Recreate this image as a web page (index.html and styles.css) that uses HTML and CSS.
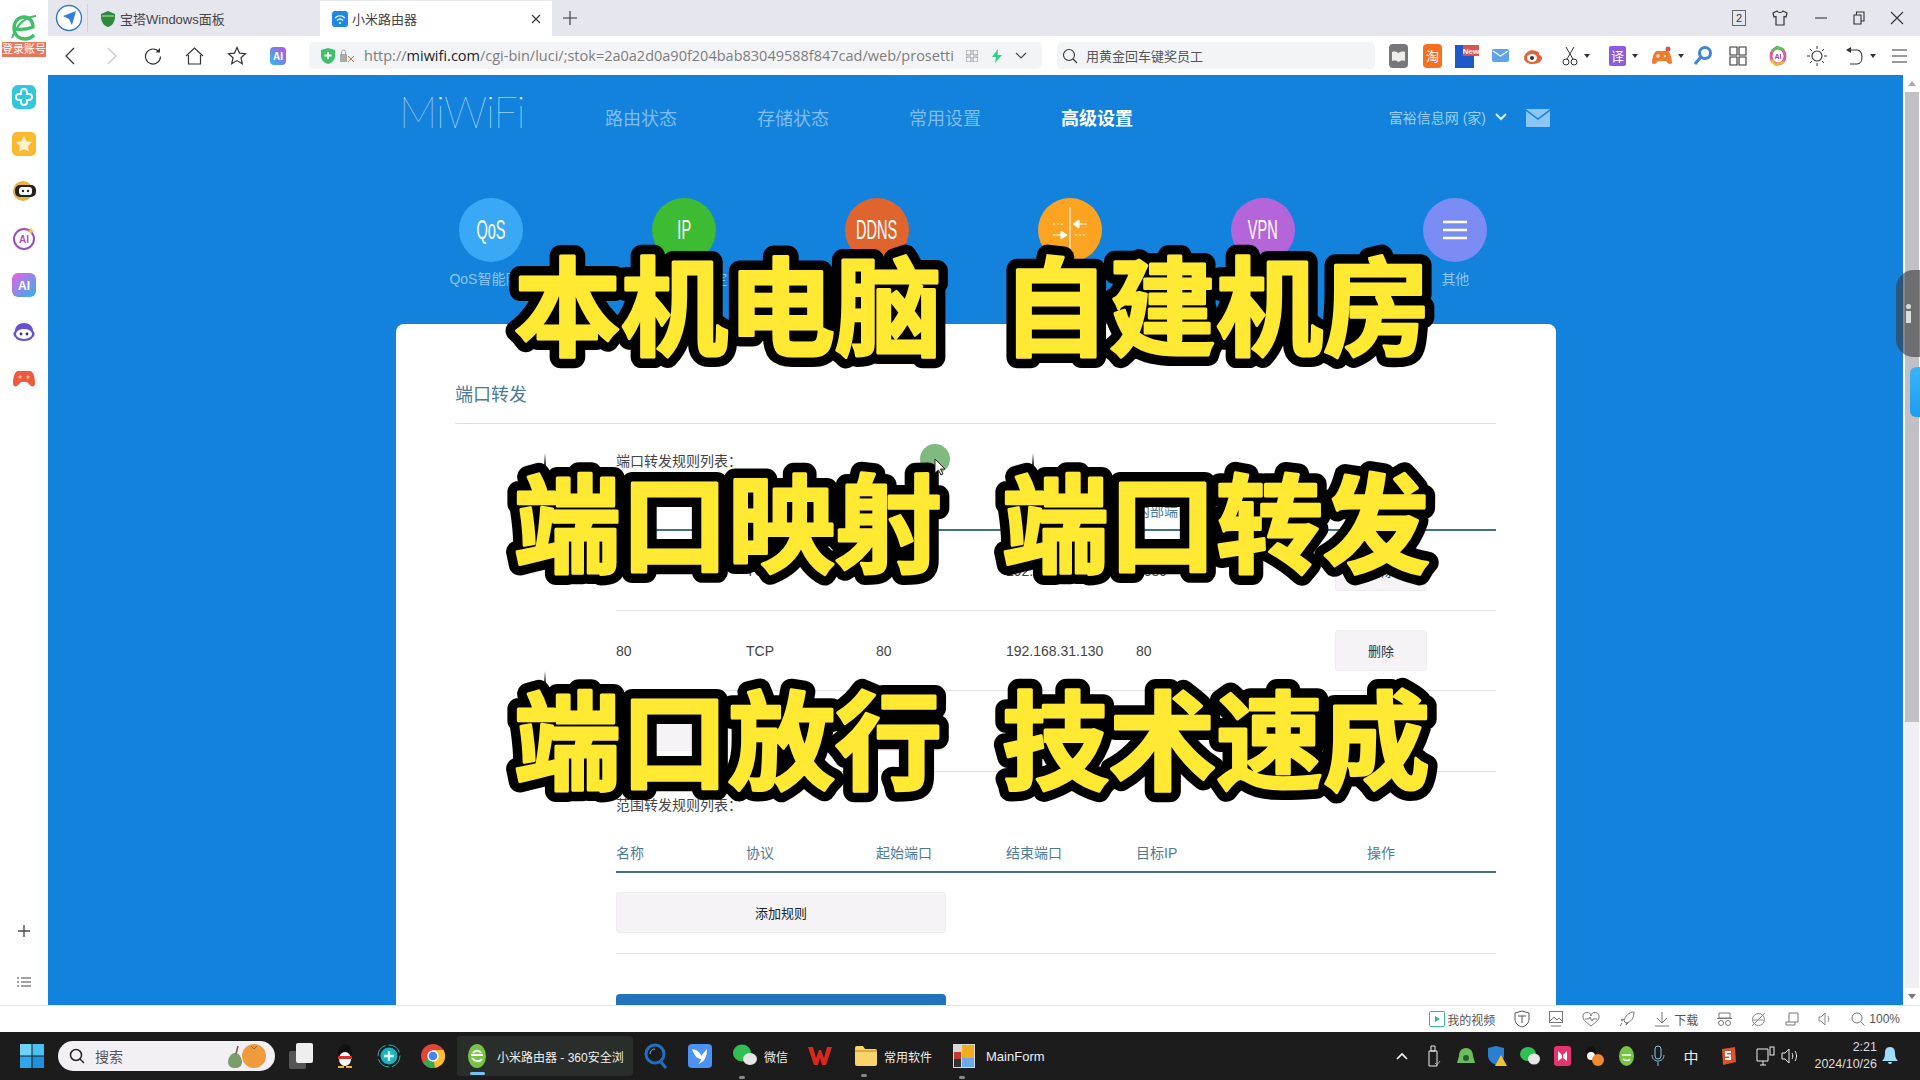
FILE: index.html
```html
<!DOCTYPE html>
<html lang="zh-CN">
<head>
    <meta charset="UTF-8">
    <title>小米路由器</title>
    <link rel="stylesheet" href="styles.css">
</head>
<body>
<div class="window">
    <!-- 左侧栏 -->
    <aside class="rail">
        <div class="rail-logo">
            <svg width="26" height="28" viewBox="0 0 26 28"><path d="M4 15c7 1 13 0 18-2 0-6-4-10-9-10-6 0-10 5-10 11 0 7 5 11 11 11 4 0 7-2 9-4" fill="none" stroke="#3fbf6a" stroke-width="3.4"/><path d="M1 24C6 10 15 3 25 2" fill="none" stroke="#3fbf6a" stroke-width="2"/></svg>
        </div>
        <div class="rail-badge">登录账号</div>
        <div class="rail-apps">
            <svg width="24" height="24" viewBox="0 0 24 24"><rect width="24" height="24" rx="6" fill="#31c7dc"/><path d="M12 4a3 3 0 0 1 3 3v2h2a3 3 0 0 1 0 6h-2v2a3 3 0 0 1-6 0v-2H7a3 3 0 0 1 0-6h2V7a3 3 0 0 1 3-3z" fill="none" stroke="#fff" stroke-width="1.8"/></svg>
            <svg width="24" height="24" viewBox="0 0 24 24"><rect width="24" height="24" rx="5" fill="#fdb92e"/><path d="M12 4l2.5 5.2 5.5.8-4 4 1 5.6-5-2.7-5 2.7 1-5.6-4-4 5.5-.8z" fill="#fff4d0"/></svg>
            <svg width="24" height="24" viewBox="0 0 24 24"><circle cx="11" cy="12" r="10" fill="#e8b23f"/><rect x="3" y="6" width="21" height="12" rx="5" fill="#222"/><rect x="7" y="8" width="13" height="8" rx="3" fill="#fff"/><circle cx="11" cy="12" r="1.2" fill="#222"/><circle cx="16" cy="12" r="1.2" fill="#222"/></svg>
            <svg width="24" height="24" viewBox="0 0 24 24"><circle cx="12" cy="13" r="10" fill="none" stroke="#9a4fc0" stroke-width="2"/><path d="M19 1l1 3 3 1-3 1-1 3-1-3-3-1 3-1z" fill="#f0c24a"/><text x="12" y="17" class="rail-ai">AI</text></svg>
            <svg width="24" height="24" viewBox="0 0 24 24"><defs><linearGradient id="aig" x1="0" y1="0" x2="1" y2="1"><stop offset="0" stop-color="#e85fe0"/><stop offset="1" stop-color="#2fb4ee"/></linearGradient></defs><rect width="24" height="24" rx="6" fill="url(#aig)"/><text x="12" y="17" class="rail-ai rail-ai-w">AI</text></svg>
            <svg width="24" height="24" viewBox="0 0 24 24"><path d="M12 3c6 0 9 4 9 8 2 1 2 5 0 6-2 3-5 4-9 4s-7-1-9-4c-2-1-2-5 0-6 0-4 3-8 9-8z" fill="#6a4fd0"/><ellipse cx="12" cy="14" rx="8" ry="5" fill="#fff"/><circle cx="9" cy="14" r="1.4" fill="#3a2a90"/><circle cx="15" cy="14" r="1.4" fill="#3a2a90"/></svg>
            <svg width="24" height="24" viewBox="0 0 24 24"><path d="M6 4h12c3 0 5 6 5 12 0 3-2 4-4 3l-4-4H9l-4 4c-2 1-4 0-4-3C1 10 3 4 6 4z" fill="#ee5a3c"/><circle cx="8" cy="10" r="1.6" fill="#ffb39f"/><circle cx="16" cy="10" r="1.6" fill="#ffb39f"/></svg>
        </div>
        <div class="rail-foot">
            <svg width="16" height="16" viewBox="0 0 16 16"><path d="M8 2v12M2 8h12" stroke="#444" stroke-width="1.3"/></svg>
            <svg width="14" height="12" viewBox="0 0 14 12"><path d="M4 2h10M4 6h10M4 10h10M0 2h2M0 6h2M0 10h2" stroke="#444" stroke-width="1.2"/></svg>
        </div>
    </aside>

    <div class="browser">
        <!-- 标签栏 -->
        <div class="tabbar">
            <div class="tab-nav">
                <svg width="28" height="28" viewBox="0 0 28 28"><circle cx="14" cy="14" r="12.5" fill="#fff" stroke="#3a78c8" stroke-width="1.4"/><path d="M21 7l-4 14-3-6-6-3z" fill="#2e7fe0"/></svg>
            </div>
            <div class="tab">
                <svg width="16" height="18" viewBox="0 0 16 18"><path d="M8 1l7 3v3c0 5-3 9-7 10-4-1-7-5-7-10V4z" fill="#2f8a3d"/><path d="M2 6h12" stroke="#bfe3b0"/></svg>
                <span>宝塔Windows面板</span>
            </div>
            <div class="tab tab-active">
                <svg width="16" height="16" viewBox="0 0 16 16"><rect width="16" height="16" rx="3" fill="#1e88e5"/><path d="M3 7c3-3 7-3 10 0M5 9.5c2-2 4-2 6 0" fill="none" stroke="#fff" stroke-width="1.2"/><circle cx="8" cy="12" r="1" fill="#fff"/></svg>
                <span>小米路由器</span>
                <svg class="tab-close" width="10" height="10" viewBox="0 0 10 10"><path d="M1 1l8 8M9 1l-8 8" stroke="#333" stroke-width="1.1"/></svg>
            </div>
            <svg class="tab-add" width="16" height="16" viewBox="0 0 16 16"><path d="M8 1v14M1 8h14" stroke="#333" stroke-width="1.1"/></svg>
            <div class="win-btns">
                <span class="win-count">2</span>
                <svg width="18" height="18" viewBox="0 0 18 18"><path d="M6 2L2 4l1 4 2-.5V16h8V7.5l2 .5 1-4-4-2c-1 2-5 2-6 0z" fill="none" stroke="#333" stroke-width="1.2"/></svg>
                <svg width="14" height="14" viewBox="0 0 14 14"><path d="M1 7h12" stroke="#333" stroke-width="1.1"/></svg>
                <svg width="12" height="14" viewBox="0 0 12 14"><path d="M1 4h7v9H1zM3.5 4V1H11v9H8" fill="none" stroke="#333" stroke-width="1.1"/></svg>
                <svg width="14" height="14" viewBox="0 0 14 14"><path d="M1 1l12 12M13 1L1 13" stroke="#333" stroke-width="1.1"/></svg>
            </div>
        </div>

        <!-- 工具栏 -->
        <div class="toolbar">
            <div class="tool-nav">
                <svg width="12" height="18" viewBox="0 0 12 18"><path d="M10 1L2 9l8 8" fill="none" stroke="#333" stroke-width="1.2"/></svg>
                <svg width="12" height="18" viewBox="0 0 12 18"><path d="M2 1l8 8-8 8" fill="none" stroke="#c4c4c4" stroke-width="1.2"/></svg>
                <svg width="18" height="18" viewBox="0 0 18 18"><path d="M15 5a7.5 7.5 0 1 0 1.5 4.5" fill="none" stroke="#333" stroke-width="1.2"/><path d="M11.5 5.5H16V1z" fill="#333"/></svg>
                <svg width="19" height="18" viewBox="0 0 19 18"><path d="M1 9l8.5-8L18 9M3.5 8v9h12V8" fill="none" stroke="#333" stroke-width="1.2"/></svg>
                <svg width="20" height="19" viewBox="0 0 20 19"><path d="M10 1.5l2.5 5.6 6 .6-4.5 4 1.3 6L10 14.6l-5.300 3.100 1.300-6-4.500-4 6-.6z" fill="none" stroke="#333" stroke-width="1.2"/></svg>
                <svg width="16" height="18" viewBox="0 0 16 18"><defs><linearGradient id="aib" x1="1" y1="0" x2="0" y2="1"><stop offset="0" stop-color="#c34fe0"/><stop offset="1" stop-color="#25c0ea"/></linearGradient></defs><rect width="16" height="18" rx="4" fill="url(#aib)"/><text x="8" y="13" class="tool-ai">AI</text></svg>
            </div>
            <div class="addr">
                <svg width="14" height="16" viewBox="0 0 14 16"><path d="M7 0l7 2v6c0 4-3 7-7 8-4-1-7-4-7-8V2z" fill="#3cc36a"/><path d="M7 4v7M3.5 7.5h7" stroke="#fff" stroke-width="2"/></svg>
                <svg class="addr-lock" width="15" height="14" viewBox="0 0 15 14"><rect y="5" width="7" height="8" fill="#aaa"/><path d="M1.5 5V3a2 2 0 0 1 4 0v2" fill="none" stroke="#aaa"/><path d="M8 7l6 6M14 7l-6 6" stroke="#d0704f"/></svg>
                <span class="addr-url">http://<b>miwifi.com</b>/cgi-bin/luci/;stok=2a0a2d0a90f204bab83049588f847cad/web/prosetti</span>
                <svg class="addr-qr" width="12" height="12" viewBox="0 0 12 12"><path d="M0 0h5v5H0zM7 0h5v5H7zM0 7h5v5H0zM7 7h5v5H7z" fill="none" stroke="#999"/></svg>
                <svg class="addr-bolt" width="10" height="14" viewBox="0 0 10 14"><path d="M6 0L0 8h4l-1 6 7-8H5.5z" fill="#2ecf86"/></svg>
                <svg class="addr-more" width="12" height="8" viewBox="0 0 12 8"><path d="M1 1l5 5 5-5" fill="none" stroke="#444" stroke-width="1.1"/></svg>
            </div>
            <div class="search-box">
                <svg width="16" height="16" viewBox="0 0 16 16"><circle cx="7" cy="7" r="5.5" fill="none" stroke="#333" stroke-width="1.1"/><path d="M11 11l4 4" stroke="#333" stroke-width="1.1"/></svg>
                <span>用黄金回车键奖员工</span>
            </div>
            <div class="tool-right">
                <span><svg width="19" height="24" viewBox="0 0 19 24"><rect width="19" height="24" rx="4" fill="#77767a"/><path d="M3 8c3-1 5 0 6.5 1C11 8 13 7 16 8v9c-3-1-5 0-6.5 1C8 17 6 16 3 17z" fill="#eee"/></svg></span>
                <span><svg width="19" height="24" viewBox="0 0 19 24"><rect width="19" height="24" rx="4" fill="#f4701e"/><text x="9.5" y="17" class="tool-tao">淘</text></svg></span>
                <span class="tool-new"><svg width="24" height="24" viewBox="0 0 24 24"><rect y="1" width="19" height="23" fill="#1f58c9"/><rect x="8" y="1" width="16" height="11" fill="#d9534f"/><text x="16" y="10" class="tool-newt">New</text></svg></span>
                <span><svg width="17" height="13" viewBox="0 0 17 13"><rect width="17" height="13" rx="2" fill="#5ea3ee"/><path d="M1 2l7.5 5L16 2" fill="none" stroke="#fff" stroke-width="1.3"/></svg></span>
                <span><svg width="20" height="17" viewBox="0 0 20 17"><path d="M8 3C3 4 0 8 0 11c0 4 5 6 9 6 5 0 9-3 9-6 0-2-2-3-3-3 1-3-2-4-7-5z" fill="#e2623a"/><ellipse cx="8" cy="11" rx="5" ry="4" fill="#fff"/><circle cx="8" cy="11" r="2" fill="#333"/></svg></span>
                <span class="tool-drop"><svg width="16" height="20" viewBox="0 0 16 20"><circle cx="4" cy="16" r="3" fill="none" stroke="#333"/><circle cx="12" cy="16" r="3" fill="none" stroke="#333"/><path d="M5 13l7-12M11 13L4 1" stroke="#333"/></svg><i class="caret"></i></span>
                <span class="tool-drop"><svg width="17" height="20" viewBox="0 0 17 20"><rect width="17" height="20" rx="2" fill="#8c5ce0"/><text x="8.5" y="15" class="tool-yi">译</text></svg><i class="caret"></i></span>
                <span class="tool-drop"><svg width="20" height="20" viewBox="0 0 20 20"><path d="M5 5h10c3 0 5 7 5 12-2 2-4 1-6-2H6c-2 3-4 4-6 2C0 12 2 5 5 5z" fill="#ef7c2e"/><circle cx="16" cy="3" r="2.5" fill="#d9534f"/><path d="M6 8v4M4 10h4" stroke="#fff"/><circle cx="13" cy="10" r="1" fill="#fff"/></svg><i class="caret"></i></span>
                <span><svg width="18" height="20" viewBox="0 0 18 20"><circle cx="11" cy="7" r="5.5" fill="none" stroke="#3d86d8" stroke-width="3"/><path d="M7 11l-6 7" stroke="#3d86d8" stroke-width="3"/></svg></span>
                <span><svg width="18" height="20" viewBox="0 0 18 20"><path d="M1 1h7v8H1zM10 1h7v8h-7zM1 11h7v8H1zM10 11h7v8h-7z" fill="none" stroke="#333" stroke-width="1.1"/></svg></span>
                <span><svg width="18" height="20" viewBox="0 0 18 20"><ellipse cx="9" cy="10" rx="7" ry="8" fill="#fff" stroke="#e05a9a" stroke-width="3"/><path d="M3 5l5-4 7 3" fill="none" stroke="#58c35c" stroke-width="2.5"/><path d="M2 14l5 5 8-3" fill="none" stroke="#f1b82e" stroke-width="2.5"/><text x="9" y="13" class="tool-aic">AI</text></svg></span>
                <span><svg width="20" height="20" viewBox="0 0 20 20"><circle cx="10" cy="10" r="5" fill="none" stroke="#333" stroke-width="1.1"/><path d="M10 0v3M10 17v3M0 10h3M17 10h3M3 3l2 2M15 15l2 2M17 3l-2 2M5 15l-2 2" stroke="#333"/></svg></span>
                <span class="tool-drop"><svg width="18" height="18" viewBox="0 0 18 18"><path d="M4 3h7c3 0 5 3 5 7s-2 7-5 7H4" fill="none" stroke="#333" stroke-width="1.1"/><path d="M0 3l5-3v6z" fill="#333"/></svg><i class="caret"></i></span>
                <span><svg width="15" height="14" viewBox="0 0 15 14"><path d="M0 1h15M0 7h15M0 13h15" stroke="#333" stroke-width="1.1"/></svg></span>
            </div>
        </div>

        <div class="viewport">
            <!-- 路由器页面 -->
            <main class="page">
                <header class="topnav">
                    <div class="logo">MiWiFi</div>
                    <nav class="nav">
                        <a>路由状态</a>
                        <a>存储状态</a>
                        <a>常用设置</a>
                        <a class="nav-on">高级设置</a>
                    </nav>
                    <div class="account">
                        <span>富裕信息网 (家)</span>
                        <svg width="12" height="8" viewBox="0 0 12 8"><path d="M1 1l5 5 5-5" fill="none" stroke="#d8f0ff" stroke-width="2"/></svg>
                        <svg class="account-mail" width="24" height="18" viewBox="0 0 24 18"><rect width="24" height="18" rx="1" fill="#8cc6f7"/><path d="M0 1l12 9 12-9" fill="none" stroke="#1282dd" stroke-width="1.5"/></svg>
                    </div>
                </header>
                <div class="features">
                    <div class="feature"><div class="bubble bubble-qos"><span>QoS</span></div><p>QoS智能限速</p></div>
                    <div class="feature"><div class="bubble bubble-ip"><span>IP</span></div><p>IP与MAC绑定</p></div>
                    <div class="feature"><div class="bubble bubble-ddns"><span>DDNS</span></div><p>DDNS</p></div>
                    <div class="feature"><div class="bubble bubble-port">
                        <svg width="36" height="46" viewBox="0 0 36 46"><path d="M18 0v46" stroke="#fff"/><path d="M1 17h12M23 28h12" stroke="#fff" stroke-dasharray="2 2"/><path d="M35 17H26M21 17l6-4v8zM1 28h9M15 28l-6-4v8z" fill="#fff" stroke="#fff"/></svg>
                    </div><p>端口转发</p></div>
                    <div class="feature"><div class="bubble bubble-vpn"><span>VPN</span></div><p>VPN</p></div>
                    <div class="feature"><div class="bubble bubble-more"><svg width="24" height="20" viewBox="0 0 24 20"><path d="M0 2h24M0 10h24M0 18h24" stroke="#fff" stroke-width="2.4"/></svg></div><p>其他</p></div>
                </div>
                <section class="card">
                    <h2 class="card-title">端口转发</h2>
                    <div class="card-body">
                        <div class="list-label">端口转发规则列表：</div>
                        <div class="rule-row rule-head">
                            <span>名称</span><span>协议</span><span>外部端口</span><span>内部IP</span><span>内部端口</span><span class="op">操作</span>
                        </div>
                        <div class="rule-row">
                            <span>8089</span><span>TCP</span><span>8089</span><span>192.168.31.130</span><span>8089</span><span class="op"><button class="del-btn">删除</button></span>
                        </div>
                        <div class="rule-row">
                            <span>80</span><span>TCP</span><span>80</span><span>192.168.31.130</span><span>80</span><span class="op"><button class="del-btn">删除</button></span>
                        </div>
                        <div class="add-wrap"><button class="add-btn">添加规则</button></div>
                        <div class="list-label list-label-2">范围转发规则列表：</div>
                        <div class="rule-row rule-head rule-head-2">
                            <span>名称</span><span>协议</span><span>起始端口</span><span>结束端口</span><span>目标IP</span><span class="op">操作</span>
                        </div>
                        <div class="add-wrap"><button class="add-btn">添加规则</button></div>
                        <button class="save-btn"></button>
                    </div>
                </section>
            </main>
            <div class="scrollbar">
                <i class="sb-up"></i>
                <div class="sb-thumb"></div>
                <div class="sb-track"></div>
                <i class="sb-down"></i>
            </div>
            <!-- 悬浮的侧边条 -->
            <div class="side-pill"><b></b><i></i></div>
            <div class="side-blue"></div>
            <div class="click-dot"></div>
            <!-- 视频字幕：黑色描边一层，黄色一层 -->
            <svg class="caption" width="1872" height="930" viewBox="0 0 1872 930">
                <path class="cap-spike" d="M495.500 400l1.500-22 1.500 22zM983.500 400l1.500-22 1.500 22zM495.500 618l1.500-22 1.500 22z"/>
                <g class="cap-black">
                    <text id="cap1" x="680" y="272">本机电脑</text>
                    <text id="cap2" x="1168" y="272">自建机房</text>
                    <text id="cap3" x="680" y="489">端口映射</text>
                    <text id="cap4" x="1168" y="489">端口转发</text>
                    <text id="cap5" x="680" y="706">端口放行</text>
                    <text id="cap6" x="1168" y="706">技术速成</text>
                </g>
                <g class="cap-yellow">
                    <use href="#cap1"/><use href="#cap2"/><use href="#cap3"/>
                    <use href="#cap4"/><use href="#cap5"/><use href="#cap6"/>
                </g>
            </svg>
            <svg class="cursor" width="12" height="18" viewBox="0 0 12 18"><path d="M1 1v14l3.5-3 2.5 5 2-1-2.500-5H11z" fill="#fff" stroke="#222"/></svg>
        </div>
    </div>
</div>

<!-- 状态栏 -->
<footer class="statusbar">
    <svg width="16" height="16" viewBox="0 0 16 16"><rect x=".5" y=".5" width="15" height="15" rx="1" fill="none" stroke="#3bb58a"/><path d="M6 5l5 3-5 3z" fill="#3bb58a"/></svg>
    <span class="st-text st-video">我的视频</span>
    <svg width="16" height="18" viewBox="0 0 16 18"><path d="M8 1l7 2v6c0 4-3 7-7 8-4-1-7-4-7-8V3z" fill="none" stroke="#555"/><path d="M4 6h8M8 6v7" stroke="#555"/></svg>
    <svg width="14" height="16" viewBox="0 0 14 16"><rect x=".5" y=".5" width="13" height="11" fill="none" stroke="#777"/><path d="M1 10l4-4 3 3 2-2 3 3M2 15h10" fill="none" stroke="#777"/></svg>
    <svg width="18" height="15" viewBox="0 0 18 15"><path d="M9 14C4 10 1 8 1 5a4 4 0 0 1 8-1 4 4 0 0 1 8 1c0 3-3 5-8 9z" fill="none" stroke="#777"/><path d="M3 7h4l1-2 2 4 1-2h4" fill="none" stroke="#777"/></svg>
    <svg width="16" height="16" viewBox="0 0 16 16"><path d="M15 1c-5 0-9 4-10 9l2 2c5-1 8-5 8-11zM5 8L2 9l2 1M8 11l-1 3 2-2M3 12l-2 3" fill="none" stroke="#777"/></svg>
    <span class="st-dl">
        <svg width="16" height="16" viewBox="0 0 16 16"><path d="M8 1v11M3 7l5 5 5-5M1 15h14" fill="none" stroke="#777"/></svg>
        <span class="st-text">下载</span>
    </span>
    <svg width="15" height="14" viewBox="0 0 15 14"><path d="M2 1h11v5H2zM0 6.5h15" fill="none" stroke="#777"/><circle cx="4" cy="11" r="2.5" fill="none" stroke="#777"/><circle cx="11" cy="11" r="2.5" fill="none" stroke="#777"/></svg>
    <svg width="15" height="15" viewBox="0 0 15 15"><circle cx="7.5" cy="7.5" r="6" fill="none" stroke="#888"/><path d="M2 8h11M1 14L14 1" fill="none" stroke="#888"/></svg>
    <svg width="14" height="14" viewBox="0 0 14 14"><path d="M4 1h9v9H4zM4 10H1v3h9v-3" fill="none" stroke="#777"/></svg>
    <svg width="14" height="14" viewBox="0 0 14 14"><path d="M1 5h2l4-4v12l-4-4H1zM10 4c1 2 1 4 0 6" fill="none" stroke="#888"/></svg>
    <span class="st-zoom">
        <svg width="14" height="14" viewBox="0 0 14 14"><circle cx="6" cy="6" r="5" fill="none" stroke="#777"/><path d="M10 10l3.5 3.5" stroke="#777"/></svg>
        <span class="st-text">100%</span>
    </span>
</footer>

<!-- 任务栏 -->
<div class="taskbar">
    <svg class="tb-win" width="24" height="24" viewBox="0 0 24 24"><rect width="11.5" height="11.5" fill="#6fd2f7"/><rect x="12.5" width="11.5" height="11.5" fill="#4dc0f3"/><rect y="12.5" width="11.5" height="11.5" fill="#2fa6ea"/><rect x="12.5" y="12.5" width="11.5" height="11.5" fill="#1d93e0"/></svg>
    <div class="tb-search">
        <svg width="16" height="16" viewBox="0 0 16 16"><circle cx="7" cy="7" r="5.5" fill="none" stroke="#222" stroke-width="1.5"/><path d="M11 11l4 4" stroke="#222" stroke-width="1.5"/></svg>
        <span>搜索</span>
        <svg class="tb-fruit" width="40" height="24" viewBox="0 0 40 24"><path d="M8 9c4 0 7 5 7 9 0 4-3 6-7 6s-7-2-7-6c0-4 3-9 7-9z" fill="#7a9c6a"/><path d="M9 10l2-8" stroke="#7a5a3a" stroke-width="1.5"/><circle cx="27" cy="12" r="12" fill="#ef9a3c"/><path d="M24 2l3 3 3-3" fill="none" stroke="#8a6a30"/></svg>
    </div>
    <div class="tb-slot"><svg width="24" height="26" viewBox="0 0 24 26"><rect y="8" width="17" height="18" rx="2" fill="#555"/><rect x="7" width="17" height="20" rx="2" fill="#eee"/></svg></div>
    <div class="tb-slot"><svg width="20" height="26" viewBox="0 0 20 26"><ellipse cx="10" cy="11" rx="7" ry="10" fill="#111"/><ellipse cx="10" cy="16" rx="6" ry="7" fill="#fff"/><path d="M3 13h14v3H3z" fill="#d7322a"/><path d="M3 24h6M11 24h6" stroke="#f5b32c" stroke-width="2"/></svg></div>
    <div class="tb-slot"><svg width="24" height="24" viewBox="0 0 24 24"><circle cx="12" cy="12" r="11" fill="none" stroke="#22b7b5" stroke-dasharray="14 3"/><circle cx="12" cy="12" r="8.5" fill="#1cb3c0"/><path d="M12 7v10M7 12h10" stroke="#d5fbff" stroke-width="2.4"/></svg></div>
    <div class="tb-slot"><svg width="24" height="24" viewBox="0 0 24 24"><circle cx="12" cy="12" r="12" fill="#e54335"/><path d="M12 12L1.6 18A12 12 0 0 0 14 23.8z" fill="#35a853"/><path d="M12 6h10.5a12 12 0 0 1-8.5 17.8L12 12z" fill="#fbc02d"/><circle cx="12" cy="12" r="5" fill="#4285f4" stroke="#fff" stroke-width="1.5"/></svg></div>
    <div class="tb-active">
        <svg width="18" height="24" viewBox="0 0 18 24"><ellipse cx="9" cy="12" rx="9" ry="12" fill="#79c447"/><path d="M3 11h12M4 14c3 4 8 4 10 1M5 9c2-3 6-3 8 0" fill="none" stroke="#fff" stroke-width="2"/></svg>
        <span>小米路由器 - 360安全浏</span>
        <i class="tb-bar"></i>
    </div>
    <div class="tb-slot tb-slot-first"><svg width="24" height="26" viewBox="0 0 24 26"><circle cx="11" cy="11" r="9" fill="none" stroke="#1f6fc4" stroke-width="3"/><path d="M16 18l6 7" stroke="#1f6fc4" stroke-width="3"/><path d="M6 11a5 5 0 0 1 5-5" stroke="#6db0ea" fill="none"/></svg></div>
    <div class="tb-slot"><svg width="24" height="24" viewBox="0 0 24 24"><rect width="24" height="24" rx="4" fill="#4b92f2"/><path d="M4 5c5 1 8 3 9 7l6-7c0 7-2 13-9 15 2-2 3-3 3-5-4 0-7-4-9-10z" fill="#fff"/></svg></div>
    <div class="tb-app tb-app-wx">
        <svg width="24" height="24" viewBox="0 0 24 24"><ellipse cx="9" cy="9" rx="9" ry="8.5" fill="#2ec052"/><ellipse cx="17" cy="15" rx="7" ry="6" fill="#e6e6e6"/></svg>
        <span>微信</span>
        <i class="tb-dot"></i>
    </div>
    <div class="tb-slot tb-slot-wps"><svg width="24" height="20" viewBox="0 0 24 20"><path d="M0 1h5l3 11 3-8h2l3 8 3-11h5l-6 18h-4l-2-7-2 7H6z" fill="#d8281e"/></svg></div>
    <div class="tb-app tb-app-dir">
        <svg width="22" height="20" viewBox="0 0 22 20"><path d="M0 2a2 2 0 0 1 2-2h6l2 3h10a2 2 0 0 1 2 2v13a2 2 0 0 1-2 2H2a2 2 0 0 1-2-2z" fill="#f7d56b"/><path d="M0 5h22" stroke="#e2aa2e" stroke-width="2"/></svg>
        <span>常用软件</span>
        <i class="tb-dot"></i>
    </div>
    <div class="tb-app tb-app-form">
        <svg width="22" height="24" viewBox="0 0 22 24"><rect width="22" height="24" fill="#d8d8d8"/><rect x="9" y="1" width="12" height="13" fill="#f0ad1c"/><rect x="9" y="14" width="12" height="9" fill="#6fa8e8"/><rect x="1" y="8" width="7" height="7" fill="#c43a2f"/><rect x="1" y="15" width="7" height="8" fill="#333"/></svg>
        <span>MainForm</span>
        <i class="tb-dot"></i>
    </div>
    <div class="tray">
        <svg width="12" height="8" viewBox="0 0 12 8"><path d="M1 7l5-5 5 5" fill="none" stroke="#fff" stroke-width="1.6"/></svg>
        <svg width="14" height="22" viewBox="0 0 14 22"><path d="M2 6h8v15H2zM4 1h4v5H4z" fill="none" stroke="#eee"/><path d="M8 18l2 2 3-4" fill="none" stroke="#aaa"/></svg>
        <svg width="18" height="18" viewBox="0 0 18 18"><path d="M9 1c5 0 7 4 7 8l2 7H0l2-7c0-4 2-8 7-8z" fill="#6cbb5c"/><circle cx="9" cy="11" r="3" fill="#2d5a2c"/></svg>
        <svg width="20" height="22" viewBox="0 0 20 22"><path d="M8 1l8 2v7c0 5-3 8-8 10-5-2-8-5-8-10V3z" fill="#2a7fd0"/><path d="M13 10l6 11H7z" fill="#f4c22f"/></svg>
        <svg width="20" height="18" viewBox="0 0 20 18"><ellipse cx="8" cy="7" rx="8" ry="7" fill="#2ec052"/><ellipse cx="14" cy="12" rx="6" ry="5.5" fill="#e6e6e6"/></svg>
        <svg width="17" height="20" viewBox="0 0 17 20"><rect width="17" height="20" rx="3" fill="#e8336e"/><path d="M4 5l4 4v3l-4 3zM13 5L9 9v3l4 3z" fill="#fff"/></svg>
        <svg width="20" height="22" viewBox="0 0 20 22"><ellipse cx="7" cy="8" rx="5" ry="7" fill="#111"/><ellipse cx="7" cy="11" rx="4" ry="4" fill="#fff"/><circle cx="14" cy="15" r="6" fill="#ef8a32"/></svg>
        <svg width="15" height="20" viewBox="0 0 15 20"><ellipse cx="7.5" cy="10" rx="7.5" ry="10" fill="#79c447"/><path d="M3 9h9M4 13c2 2 6 2 7 0" fill="none" stroke="#fff" stroke-width="1.5"/></svg>
        <svg width="14" height="22" viewBox="0 0 14 22"><rect x="4" y="1" width="6" height="13" rx="3" fill="none" stroke="#8cc4e8"/><path d="M1 10c0 8 12 8 12 0M7 17v4" fill="none" stroke="#8cc4e8"/></svg>
        <span class="tray-ime">中</span>
        <svg class="tray-s" width="16" height="18" viewBox="0 0 16 18"><path d="M2 2l13-2 1 15-13 3z" fill="#d9532c"/><path d="M11 5H6v3.5h4V12H5" fill="none" stroke="#fff" stroke-width="2"/></svg>
        <svg class="tray-net" width="20" height="20" viewBox="0 0 20 20"><path d="M1 3h11v12H1zM4 19h6M7 15v4" fill="none" stroke="#eee"/><rect x="14" y="1" width="4" height="8" fill="none" stroke="#eee"/></svg>
        <svg width="18" height="16" viewBox="0 0 18 16"><path d="M1 5h3l4-4v14l-4-4H1zM11 5c1 2 1 4 0 6M14 3c2 3 2 7 0 10" fill="none" stroke="#eee"/></svg>
        <div class="clock"><span>2:21</span><span>2024/10/26</span></div>
        <svg class="tray-bell" width="16" height="18" viewBox="0 0 16 18"><path d="M8 0c4 0 5 3 5 6 0 4 1 6 3 8H0c2-2 3-4 3-8 0-3 1-6 5-6zM6 15h4a2 2 0 0 1-4 0z" fill="#9fdcfb"/></svg>
    </div>
</div>
</body>
</html>
```

FILE: styles.css
```css
* {
    box-sizing: border-box;
}

html, body {
    margin: 0;
    height: 100%;
    overflow: hidden;
}

body {
    display: flex;
    flex-direction: column;
    width: 1920px;
    height: 1080px;
    font-family: "Liberation Sans", "Noto Sans CJK SC", sans-serif;
    background-color: #fff;
    color: #333;
}

.window {
    display: flex;
    height: 1005px;
}

/* 左侧栏 */
.rail {
    width: 48px;
    display: flex;
    flex-direction: column;
    align-items: center;
    background-color: #fff;
}

.rail-logo {
    margin-top: 14px;
    height: 28px;
}

.rail-badge {
    width: 44px;
    height: 15px;
    background-color: #e8775f;
    color: #fff;
    font-size: 11px;
    line-height: 15px;
    text-align: center;
    white-space: nowrap;
    overflow: hidden;
}

.rail-apps {
    margin-top: 28px;
    display: flex;
    flex-direction: column;
    gap: 23px;
}

.rail-ai {
    font: bold 10px "Liberation Sans", sans-serif;
    fill: #b04fc8;
    text-anchor: middle;
}

.rail-ai-w {
    font-size: 12px;
    fill: #fff;
}

.rail-foot {
    margin-top: auto;
    padding-bottom: 17px;
    display: flex;
    flex-direction: column;
    align-items: center;
    gap: 37px;
}

.browser {
    flex: 1;
    min-width: 0;
    display: flex;
    flex-direction: column;
}

/* 标签栏 */
.tabbar {
    height: 36px;
    display: flex;
    align-items: center;
    background-color: #e6e6ef;
}

.tab-nav {
    width: 40px;
    padding-left: 7px;
    display: flex;
    border-right: 1px solid #d0d0da;
    height: 28px;
}

.tab {
    width: 232px;
    height: 35px;
    margin-top: 1px;
    display: flex;
    align-items: center;
    gap: 4px;
    padding-left: 12px;
    font-size: 13px;
    color: #444;
}

.tab-active {
    background-color: #fff;
}

.tab-close {
    margin-left: auto;
    margin-right: 11px;
}

.tab-add {
    margin-left: 10px;
}

.win-btns {
    margin-left: auto;
    display: flex;
    align-items: center;
    padding-right: 16px;
    gap: 25px;
}

.win-count {
    width: 14px;
    height: 16px;
    border: 1px solid #666;
    font-size: 11px;
    line-height: 14px;
    text-align: center;
}

/* 工具栏 */
.toolbar {
    height: 39px;
    display: flex;
    align-items: center;
    background-color: #fff;
}

.tool-nav {
    width: 252px;
    padding-left: 1px;
    display: grid;
    grid-template-columns: repeat(6, 41.7px);
    justify-items: center;
    align-items: center;
}

.tool-ai {
    font: bold 10px "Liberation Sans", sans-serif;
    fill: #fff;
    text-anchor: middle;
}

.addr {
    width: 733px;
    height: 27px;
    margin-left: 9px;
    padding-left: 12px;
    display: flex;
    align-items: center;
    background-color: #f3f4f7;
    border-radius: 5px;
}

.addr-lock {
    margin-left: 5px;
}

.addr-url {
    margin-left: 9px;
    width: 590px;
    font-family: "Open Sans", sans-serif;
    font-size: 14.5px;
    color: #7d7d7d;
    white-space: nowrap;
    overflow: hidden;
}

.addr-url b {
    font-weight: 400;
    color: #222;
}

.addr-qr {
    margin-left: 12px;
}

.addr-bolt {
    margin-left: 14px;
}

.addr-more {
    margin-left: 13px;
}

.search-box {
    width: 318px;
    height: 27px;
    margin-left: 15px;
    padding-left: 5px;
    display: flex;
    align-items: center;
    gap: 8px;
    background-color: #f3f4f7;
    border-radius: 5px;
    font-size: 13px;
    color: #555;
}

.tool-right {
    margin-left: 7px;
    display: grid;
    grid-template-columns: 32.5px 35px 34.5px 32.5px 34.5px 50px 44px 46px 23px 48px 32px 46px 42px 34px;
    align-items: center;
}

.tool-right > span {
    display: flex;
    justify-content: center;
    align-items: center;
}

.tool-drop {
    gap: 6px;
}

.caret {
    width: 0;
    height: 0;
    border-left: 3px solid transparent;
    border-right: 3px solid transparent;
    border-top: 4px solid #333;
}

.tool-tao, .tool-yi {
    font: 13px "Noto Sans CJK SC", sans-serif;
    fill: #fff;
    text-anchor: middle;
}

.tool-newt {
    font: bold 8px "Liberation Sans", sans-serif;
    fill: #fff;
    text-anchor: middle;
}

.tool-aic {
    font: bold 7px "Liberation Sans", sans-serif;
    fill: #a03fc0;
    text-anchor: middle;
}

/* 页面 */
.viewport {
    flex: 1;
    position: relative;
    display: flex;
    min-height: 0;
}

.page {
    width: 1855px;
    background-color: #1282dd;
    overflow: hidden;
}

.topnav {
    height: 84px;
    padding: 0 353px 0 354px;
    display: flex;
    align-items: center;
}

.logo {
    width: 206px;
    margin: -12px 0 0 -3px;
    flex: none;
    font-family: "Lato", "Roboto", sans-serif;
    font-weight: 100;
    font-size: 43px;
    letter-spacing: -1px;
    color: #e4f4ff;
}

.nav {
    display: flex;
    gap: 80px;
}

.nav a {
    font-size: 18px;
    color: #7fbdec;
}

.nav .nav-on {
    color: #fff;
    font-weight: bold;
}

.account {
    margin-left: auto;
    display: flex;
    align-items: center;
    font-size: 14px;
    color: #9ccdf2;
    gap: 9px;
}

.account-mail {
    margin-left: 10px;
    margin-top: 2px;
}

.features {
    margin-top: 39px;
    padding-left: 347px;
    display: flex;
}

.feature {
    width: 192.8px;
    display: flex;
    flex-direction: column;
    align-items: center;
}

.feature p {
    margin: 9px 0 0;
    font-size: 14px;
    line-height: 16px;
    color: #8cc6f2;
}

.bubble {
    width: 64px;
    height: 64px;
    border-radius: 50%;
    display: flex;
    align-items: center;
    justify-content: center;
    color: #fff;
    font-size: 28px;
}

.bubble span {
    transform: scaleX(.52);
    white-space: nowrap;
}

.bubble-qos { background-color: #3aa9f5; }
.bubble-ip { background-color: #3dbb32; }
.bubble-ddns { background-color: #e0642e; }
.bubble-port { background-color: #fca421; }
.bubble-vpn { background-color: #b565da; }
.bubble-more { background-color: #7b8cf5; }

.card {
    width: 1160px;
    margin: 37px 0 0 348px;
    height: 700px;
    padding: 57px 60px 0 59px;
    background-color: #fff;
    border-radius: 8px;
}

.card-title {
    margin: 0;
    height: 43px;
    padding-bottom: 15px;
    border-bottom: 1px solid #e0e0e0;
    font-size: 18px;
    font-weight: 400;
    line-height: 28px;
    color: #4f7a96;
}

.card-body {
    padding-left: 161px;
}

.list-label {
    padding-top: 27px;
    height: 47px;
    font-size: 14px;
    line-height: 20px;
    color: #444;
}

.list-label-2 {
    padding-top: 23px;
    height: 43px;
}

.rule-row {
    display: grid;
    grid-template-columns: 130px 130px 130px 130px 130px 230px;
    align-items: center;
    height: 80px;
    border-bottom: 1px solid #e2e2e2;
    font-size: 14px;
    color: #444;
}

.rule-head {
    margin-top: 20px;
    height: 40px;
    border-bottom: 2px solid #41708c;
    color: #4f7a96;
}

.rule-head-2 {
    margin-top: 18px;
}

.op {
    text-align: center;
}

.del-btn {
    width: 92px;
    height: 41px;
    background-color: #f5f3f5;
    border: 1px solid #eee;
    border-radius: 3px;
    font: 13px "Liberation Sans", "Noto Sans CJK SC", sans-serif;
    color: #333;
}

.add-wrap {
    padding: 19px 0 20px;
    border-bottom: 1px solid #e2e2e2;
}

.add-btn {
    display: block;
    width: 330px;
    height: 41px;
    background-color: #f5f3f5;
    border: 1px solid #eee;
    border-radius: 3px;
    font: 13px "Liberation Sans", "Noto Sans CJK SC", sans-serif;
    color: #222;
}

.save-btn {
    display: block;
    width: 330px;
    height: 41px;
    margin-top: 40px;
    background-color: #2273bb;
    border: none;
    border-radius: 4px;
}

.scrollbar {
    width: 14px;
    margin-left: 2px;
    display: flex;
    flex-direction: column;
    background-color: #f0f0f2;
}

.sb-up, .sb-down {
    height: 17px;
    background-color: #fff;
    position: relative;
    flex: none;
}

.sb-up::after, .sb-down::after {
    content: "";
    position: absolute;
    left: 3px;
    top: 6px;
    border-left: 4px solid transparent;
    border-right: 4px solid transparent;
    border-bottom: 5px solid #aaa;
}

.sb-down::after {
    border-bottom: none;
    border-top: 5px solid #777;
}

.sb-thumb {
    height: 630px;
    background-color: #c1c0c4;
}

.sb-track {
    flex: 1;
}

/* 悬浮层 */
.side-pill {
    position: absolute;
    right: 0;
    top: 195px;
    width: 24px;
    height: 87px;
    border-radius: 18px 0 0 18px;
    background-color: rgba(60, 60, 60, .62);
    display: flex;
    flex-direction: column;
    align-items: center;
    justify-content: center;
    gap: 2px;
}

.side-pill b {
    width: 5px;
    height: 5px;
    border-radius: 50%;
    background-color: #ddd;
}

.side-pill i {
    width: 5px;
    height: 12px;
    background-color: #ddd;
}

.side-blue {
    position: absolute;
    right: 0;
    top: 292px;
    width: 10px;
    height: 50px;
    border-radius: 6px 0 0 6px;
    background: linear-gradient(#3cb4f8, #1d9cf0);
}

.click-dot {
    position: absolute;
    left: 872px;
    top: 369px;
    width: 30px;
    height: 30px;
    border-radius: 50%;
    background-color: #7fbb7f;
}

.cursor {
    position: absolute;
    left: 886px;
    top: 383px;
}

.caption {
    position: absolute;
    left: 0;
    top: 0;
    pointer-events: none;
}

.caption text {
    font-family: "Noto Sans CJK SC", sans-serif;
    font-weight: 700;
    font-size: 107px;
    text-anchor: middle;
}

.cap-spike {
    fill: #000;
}

.cap-black {
    fill: #000;
    stroke: #000;
    stroke-width: 22px;
    stroke-linejoin: round;
}

.cap-yellow {
    fill: #ffe933;
    stroke: #ffe933;
    stroke-width: 3px;
    stroke-linejoin: round;
}

/* 状态栏 */
.statusbar {
    height: 27px;
    padding-right: 20px;
    display: flex;
    align-items: center;
    justify-content: flex-end;
    gap: 19px;
    border-top: 1px solid #e4e4e4;
    background-color: #fff;
}

.st-text {
    font-size: 12px;
    color: #555;
}

.st-video {
    margin-left: -17px;
}

.st-dl, .st-zoom {
    display: flex;
    align-items: center;
    gap: 4px;
}

/* 任务栏 */
.taskbar {
    height: 48px;
    padding-left: 20px;
    display: flex;
    align-items: center;
    background-color: #1c1c1c;
    color: #eee;
    font-size: 13px;
}

.tb-search {
    width: 217px;
    height: 30px;
    margin: 0 4px 0 14px;
    padding: 0 8px 0 11px;
    display: flex;
    align-items: center;
    gap: 10px;
    border-radius: 15px;
    background-color: #f3f0f5;
    color: #555;
    font-size: 14px;
}

.tb-fruit {
    margin-left: auto;
}

.tb-slot {
    width: 44px;
    display: flex;
    justify-content: center;
}

.tb-active {
    position: relative;
    width: 176px;
    height: 40px;
    margin-left: 2px;
    padding-left: 11px;
    display: flex;
    align-items: center;
    gap: 11px;
    border-radius: 4px;
    background-color: #2a2e2b;
    white-space: nowrap;
    overflow: hidden;
    font-size: 12px;
}

.tb-bar {
    position: absolute;
    left: 13px;
    bottom: 1px;
    width: 15px;
    height: 3px;
    border-radius: 2px;
    background-color: #6fc4f0;
}

.tb-slot-first {
    margin-left: 1px;
}

.tb-app {
    position: relative;
    display: flex;
    align-items: center;
    gap: 7px;
    font-size: 12px;
}

.tb-app-wx {
    margin-left: 11px;
}

.tb-slot-wps {
    margin-left: 10px;
}

.tb-app-dir {
    margin-left: 13px;
}

.tb-app-form {
    margin-left: 21px;
    gap: 11px;
    font-size: 13px;
}

.tb-dot {
    position: absolute;
    left: 6px;
    bottom: -11px;
    width: 6px;
    height: 3px;
    border-radius: 2px;
    background-color: #888;
}

.tray {
    margin-left: auto;
    padding-right: 20px;
    display: grid;
    grid-auto-flow: column;
    align-items: center;
    justify-items: center;
    grid-template-columns: repeat(9, 32px) 34px 40px 36px 12px 84px 20px;
}

.tray-ime {
    font-size: 15px;
}

.clock {
    display: flex;
    flex-direction: column;
    align-items: flex-end;
    justify-self: end;
    padding-right: 3px;
    font-size: 12.5px;
    line-height: 17px;
    color: #ddd;
}
```
